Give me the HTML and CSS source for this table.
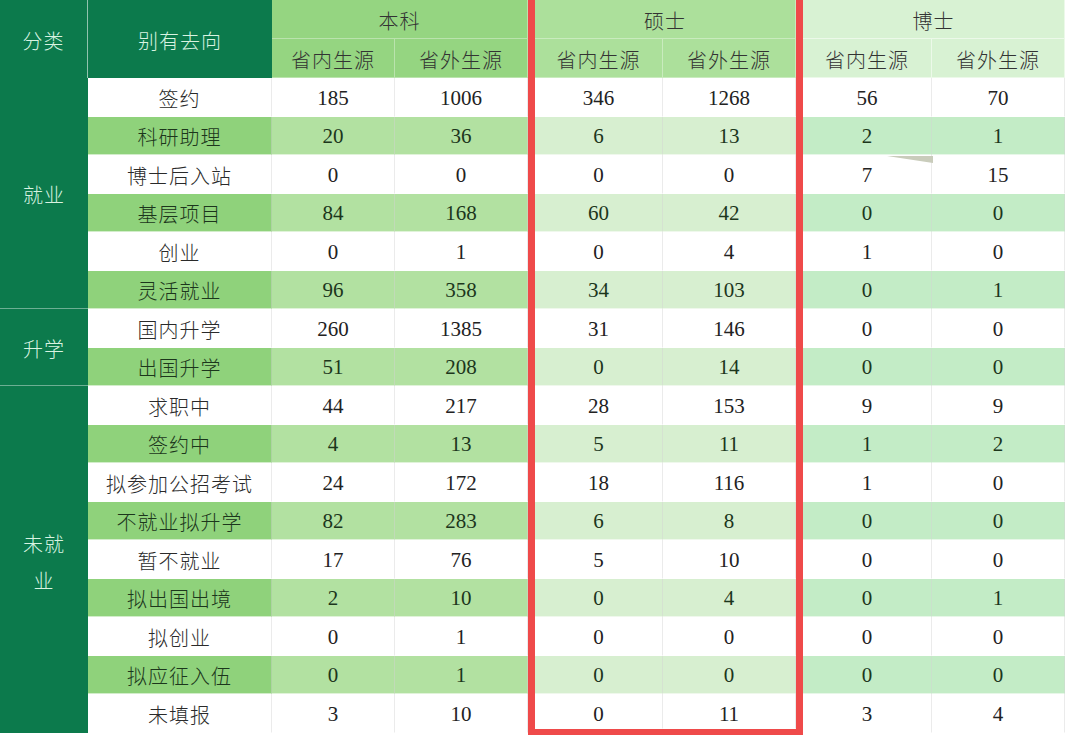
FILE: index.html
```html
<!DOCTYPE html>
<html lang="zh-CN">
<head>
<meta charset="utf-8">
<title>毕业去向统计</title>
<link rel="stylesheet" href="styles.css">
</head>
<body>
<div class="sheet">
  <div class="seg seg-a">
    <div class="c hdark cat-h">分类</div>
    <div class="c hdark lab-h">别有去向</div>
    <div class="c hb span2">本科</div>
    <div class="c hb">省内生源</div>
    <div class="c hb">省外生源</div>
    <div class="c cat r-jy">就业</div>
    <div class="c cat r-sx">升学</div>
    <div class="c cat r-wjy">未就业</div>

    <div class="row"><div class="c lab">签约</div><div class="c n">185</div><div class="c n">1006</div></div>
    <div class="row g"><div class="c lab">科研助理</div><div class="c n">20</div><div class="c n">36</div></div>
    <div class="row"><div class="c lab">博士后入站</div><div class="c n">0</div><div class="c n">0</div></div>
    <div class="row g"><div class="c lab">基层项目</div><div class="c n">84</div><div class="c n">168</div></div>
    <div class="row"><div class="c lab">创业</div><div class="c n">0</div><div class="c n">1</div></div>
    <div class="row g"><div class="c lab">灵活就业</div><div class="c n">96</div><div class="c n">358</div></div>
    <div class="row"><div class="c lab">国内升学</div><div class="c n">260</div><div class="c n">1385</div></div>
    <div class="row g"><div class="c lab">出国升学</div><div class="c n">51</div><div class="c n">208</div></div>
    <div class="row"><div class="c lab">求职中</div><div class="c n">44</div><div class="c n">217</div></div>
    <div class="row g"><div class="c lab">签约中</div><div class="c n">4</div><div class="c n">13</div></div>
    <div class="row"><div class="c lab">拟参加公招考试</div><div class="c n">24</div><div class="c n">172</div></div>
    <div class="row g"><div class="c lab">不就业拟升学</div><div class="c n">82</div><div class="c n">283</div></div>
    <div class="row"><div class="c lab">暂不就业</div><div class="c n">17</div><div class="c n">76</div></div>
    <div class="row g"><div class="c lab">拟出国出境</div><div class="c n">2</div><div class="c n">10</div></div>
    <div class="row"><div class="c lab">拟创业</div><div class="c n">0</div><div class="c n">1</div></div>
    <div class="row g"><div class="c lab">拟应征入伍</div><div class="c n">0</div><div class="c n">1</div></div>
    <div class="row"><div class="c lab">未填报</div><div class="c n">3</div><div class="c n">10</div></div>
  </div>

  <div class="seg seg-b">
    <div class="c hs span2">硕士</div>
    <div class="c hs">省内生源</div>
    <div class="c hs">省外生源</div>
    <div class="row"><div class="c n">346</div><div class="c n">1268</div></div>
    <div class="row g"><div class="c n">6</div><div class="c n">13</div></div>
    <div class="row"><div class="c n">0</div><div class="c n">0</div></div>
    <div class="row g"><div class="c n">60</div><div class="c n">42</div></div>
    <div class="row"><div class="c n">0</div><div class="c n">4</div></div>
    <div class="row g"><div class="c n">34</div><div class="c n">103</div></div>
    <div class="row"><div class="c n">31</div><div class="c n">146</div></div>
    <div class="row g"><div class="c n">0</div><div class="c n">14</div></div>
    <div class="row"><div class="c n">28</div><div class="c n">153</div></div>
    <div class="row g"><div class="c n">5</div><div class="c n">11</div></div>
    <div class="row"><div class="c n">18</div><div class="c n">116</div></div>
    <div class="row g"><div class="c n">6</div><div class="c n">8</div></div>
    <div class="row"><div class="c n">5</div><div class="c n">10</div></div>
    <div class="row g"><div class="c n">0</div><div class="c n">4</div></div>
    <div class="row"><div class="c n">0</div><div class="c n">0</div></div>
    <div class="row g"><div class="c n">0</div><div class="c n">0</div></div>
    <div class="row last"><div class="c n">0</div><div class="c n">11</div></div>
  </div>

  <div class="seg seg-c">
    <div class="c hd span2">博士</div>
    <div class="c hd">省内生源</div>
    <div class="c hd">省外生源</div>
    <div class="row"><div class="c n">56</div><div class="c n">70</div></div>
    <div class="row g"><div class="c n">2</div><div class="c n">1</div></div>
    <div class="row"><div class="c n">7</div><div class="c n">15</div></div>
    <div class="row g"><div class="c n">0</div><div class="c n">0</div></div>
    <div class="row"><div class="c n">1</div><div class="c n">0</div></div>
    <div class="row g"><div class="c n">0</div><div class="c n">1</div></div>
    <div class="row"><div class="c n">0</div><div class="c n">0</div></div>
    <div class="row g"><div class="c n">0</div><div class="c n">0</div></div>
    <div class="row"><div class="c n">9</div><div class="c n">9</div></div>
    <div class="row g"><div class="c n">1</div><div class="c n">2</div></div>
    <div class="row"><div class="c n">1</div><div class="c n">0</div></div>
    <div class="row g"><div class="c n">0</div><div class="c n">0</div></div>
    <div class="row"><div class="c n">0</div><div class="c n">0</div></div>
    <div class="row g"><div class="c n">0</div><div class="c n">1</div></div>
    <div class="row"><div class="c n">0</div><div class="c n">0</div></div>
    <div class="row g"><div class="c n">0</div><div class="c n">0</div></div>
    <div class="row"><div class="c n">3</div><div class="c n">4</div></div>
    <svg class="fold" width="46" height="8" viewBox="0 0 46 8"><polygon points="0,0 46,0 46,7" fill="#c9ccbb"/></svg>
  </div>
</div>
</body>
</html>
```

FILE: styles.css
```css
* { box-sizing: border-box; }

body {
  margin: 0;
  width: 1065px;
  height: 735px;
  overflow: hidden;
  background: #ffffff;
  font-family: "Noto Sans CJK SC", "Noto Sans", sans-serif;
  font-weight: 300;
}

.sheet {
  display: flex;
  align-items: flex-start;
}

.seg {
  display: grid;
  grid-template-rows: 39px 39px repeat(17, 38.5px);
}

.seg-a { grid-template-columns: 88px 184px 123px 133px; }

.seg-b {
  grid-template-columns: 128px 133px;
  grid-template-rows: 39px 39px repeat(16, 38.5px) 34.5px;
  border: 7px solid #ef4a4a;
  border-top: 0;
}

.seg-c {
  position: relative;
  grid-template-columns: 129px 133px;
}

.row { display: contents; }

.c {
  display: flex;
  align-items: center;
  justify-content: center;
  text-align: center;
  padding-top: 3px;
  font-size: 20px;
  letter-spacing: 1px;
  color: #2a2a2a;
  border-right: 1px solid rgba(210, 210, 210, 0.45);
  border-bottom: 1px solid rgba(255, 255, 255, 0.6);
}

.row.last .c { padding-top: 7px; }

.span2 { grid-column: span 2; }

/* header cells */
.hdark {
  grid-row: span 2;
  background: #0c7a4c;
  color: #d9f3e1;
  border-right: 1px solid rgba(255, 255, 255, 0.55);
  border-bottom: 0;
}
.cat-h { grid-column: 1; grid-row: 1 / 3; }
.lab-h { grid-column: 2; grid-row: 1 / 3; border-right: 0; }

.hb { background: #95d581; color: #333; border-right-color: rgba(255, 255, 255, 0.35); border-bottom-color: rgba(255, 255, 255, 0.35); }
.hs { background: #ace09b; color: #333; border-right-color: rgba(255, 255, 255, 0.35); border-bottom-color: rgba(255, 255, 255, 0.35); }
.hd { background: #d8f2d3; color: #333; border-right-color: rgba(255, 255, 255, 0.5); border-bottom-color: rgba(255, 255, 255, 0.5); }

/* category column */
.cat {
  grid-column: 1;
  background: #0c7a4c;
  color: #d9f3e1;
  padding: 3px 20px 0;
  line-height: 37px;
  border-right: 0;
  border-bottom: 1px solid rgba(255, 255, 255, 0.4);
}
.r-jy { grid-row: 3 / 9; }
.r-sx { grid-row: 9 / 11; }
.r-wjy { grid-row: 11 / 20; border-bottom: 0; padding-top: 6px; }

/* numbers */
.n {
  font-family: "Liberation Serif", "Times New Roman", serif;
  font-weight: 400;
  font-size: 21px;
  letter-spacing: 0;
  color: #222;
}

/* green rows */
.row.g .c { color: #1c361c; }
.seg-a .row.g .lab { background: #8fd27b; }
.seg-a .row.g .n { background: #b2e1a1; }
.seg-b .row.g .n { background: #d7efd0; }
.seg-c .row.g .n { background: #c3ecc6; }

.fold {
  position: absolute;
  left: 84px;
  top: 156px;
}
```
